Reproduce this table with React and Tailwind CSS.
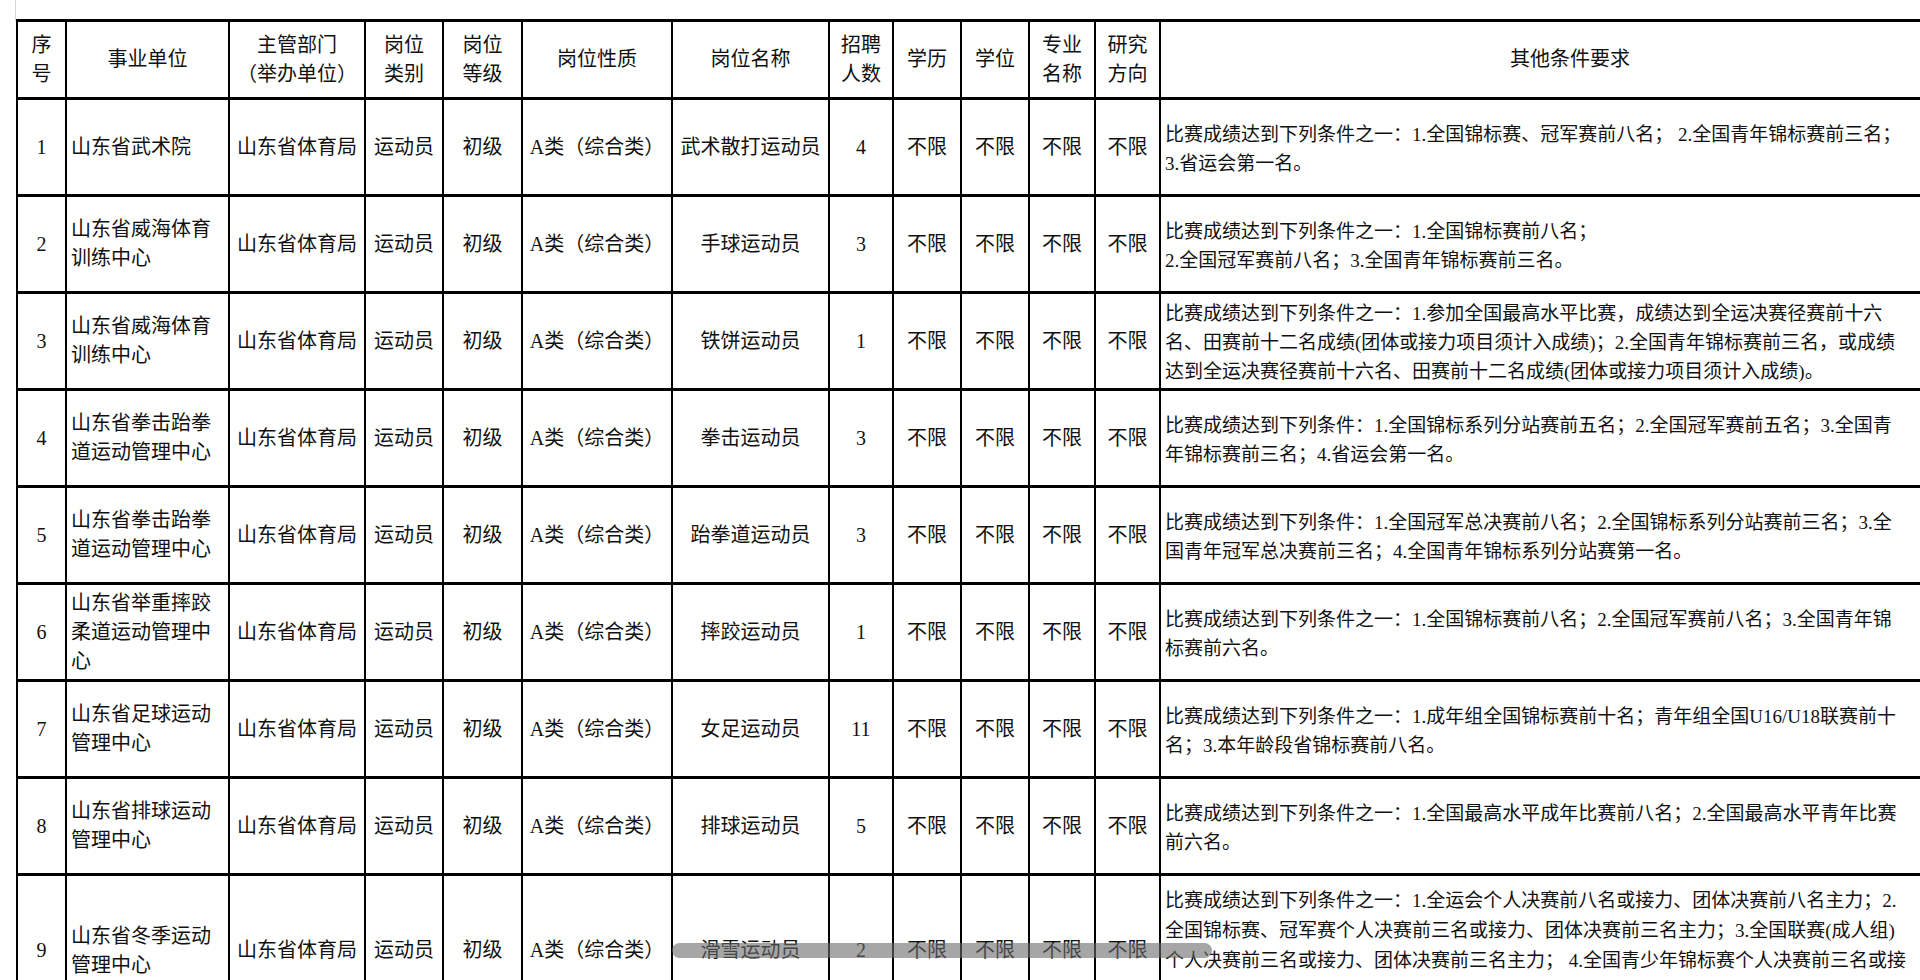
import React from "react";

const HEAD = [
  ["序", "号"],
  ["事业单位"],
  ["主管部门", "（举办单位）"],
  ["岗位", "类别"],
  ["岗位", "等级"],
  ["岗位性质"],
  ["岗位名称"],
  ["招聘", "人数"],
  ["学历"],
  ["学位"],
  ["专业", "名称"],
  ["研究", "方向"],
  ["其他条件要求"],
];

const COLS = [49, 163, 136, 78, 79, 150, 157, 64, 68, 68, 66, 65, 820];

const ROWS = [
  {
    n: "1",
    unit: ["山东省武术院"],
    name: "武术散打运动员",
    count: "4",
    cond: ["比赛成绩达到下列条件之一：1.全国锦标赛、冠军赛前八名； 2.全国青年锦标赛前三名；", "3.省运会第一名。"],
  },
  {
    n: "2",
    unit: ["山东省威海体育", "训练中心"],
    name: "手球运动员",
    count: "3",
    cond: ["比赛成绩达到下列条件之一：1.全国锦标赛前八名；", "2.全国冠军赛前八名；3.全国青年锦标赛前三名。"],
  },
  {
    n: "3",
    unit: ["山东省威海体育", "训练中心"],
    name: "铁饼运动员",
    count: "1",
    cond: [
      "比赛成绩达到下列条件之一：1.参加全国最高水平比赛，成绩达到全运决赛径赛前十六",
      "名、田赛前十二名成绩(团体或接力项目须计入成绩)；2.全国青年锦标赛前三名，或成绩",
      "达到全运决赛径赛前十六名、田赛前十二名成绩(团体或接力项目须计入成绩)。",
    ],
  },
  {
    n: "4",
    unit: ["山东省拳击跆拳", "道运动管理中心"],
    name: "拳击运动员",
    count: "3",
    cond: ["比赛成绩达到下列条件：1.全国锦标系列分站赛前五名；2.全国冠军赛前五名；3.全国青", "年锦标赛前三名；4.省运会第一名。"],
  },
  {
    n: "5",
    unit: ["山东省拳击跆拳", "道运动管理中心"],
    name: "跆拳道运动员",
    count: "3",
    cond: ["比赛成绩达到下列条件：1.全国冠军总决赛前八名；2.全国锦标系列分站赛前三名；3.全", "国青年冠军总决赛前三名；4.全国青年锦标系列分站赛第一名。"],
  },
  {
    n: "6",
    unit: ["山东省举重摔跤", "柔道运动管理中", "心"],
    name: "摔跤运动员",
    count: "1",
    cond: ["比赛成绩达到下列条件之一：1.全国锦标赛前八名；2.全国冠军赛前八名；3.全国青年锦", "标赛前六名。"],
  },
  {
    n: "7",
    unit: ["山东省足球运动", "管理中心"],
    name: "女足运动员",
    count: "11",
    cond: ["比赛成绩达到下列条件之一：1.成年组全国锦标赛前十名；青年组全国U16/U18联赛前十", "名；3.本年龄段省锦标赛前八名。"],
  },
  {
    n: "8",
    unit: ["山东省排球运动", "管理中心"],
    name: "排球运动员",
    count: "5",
    cond: ["比赛成绩达到下列条件之一：1.全国最高水平成年比赛前八名；2.全国最高水平青年比赛", "前六名。"],
  },
  {
    n: "9",
    unit: ["山东省冬季运动", "管理中心"],
    name: "滑雪运动员",
    count: "2",
    cond: [
      "比赛成绩达到下列条件之一：1.全运会个人决赛前八名或接力、团体决赛前八名主力；2.",
      "全国锦标赛、冠军赛个人决赛前三名或接力、团体决赛前三名主力；3.全国联赛(成人组)",
      "个人决赛前三名或接力、团体决赛前三名主力； 4.全国青少年锦标赛个人决赛前三名或接",
      "力、团体决赛前三名主力；5.省运会、省锦标赛冠军或接力、团体决赛冠军主力；6.亚洲",
    ],
    last: true,
  },
];

const cell = "border-x-2 border-y-[3px] border-black align-middle p-0";

const Lines = ({ items }) => items.map((t, i) => (
  <div key={i} className="whitespace-nowrap">{t}</div>
));

export default function App() {
  return (
    <div className="relative w-[1920px] h-[980px] overflow-hidden bg-white text-[#111] text-[20px] leading-[29px] font-['Liberation_Serif','Noto_Sans_CJK_SC',serif]">
      {/* top strip */}
      <div className="h-[21px] ml-[15px] border-l border-[#d4d4dc] border-b-2 border-b-[#d8d8ea]" />

      <table className="table-fixed border-collapse ml-[16px] -mt-[2px]" style={{ width: COLS.reduce((a, b) => a + b, 0) }}>
        <colgroup>
          {COLS.map((w, i) => <col key={i} style={{ width: w }} />)}
        </colgroup>
        <thead>
          <tr className="h-[78px]">
            {HEAD.map((h, i) => (
              <th key={i} className={`${cell} font-normal text-center`}>
                <Lines items={h} />
              </th>
            ))}
          </tr>
        </thead>
        <tbody>
          {ROWS.map((r) => (
            <tr key={r.n} className={r.last ? "h-[152px]" : "h-[97px]"}>
              <td className={`${cell} text-center`}>{r.n}</td>
              <td className={`${cell} text-left pl-[4px]`}><Lines items={r.unit} /></td>
              <td className={`${cell} text-center`}>山东省体育局</td>
              <td className={`${cell} text-center`}>运动员</td>
              <td className={`${cell} text-center`}>初级</td>
              <td className={`${cell} text-center`}>A类（综合类）</td>
              <td className={`${cell} text-center`}>{r.name}</td>
              <td className={`${cell} text-center`}>{r.count}</td>
              <td className={`${cell} text-center`}>不限</td>
              <td className={`${cell} text-center`}>不限</td>
              <td className={`${cell} text-center`}>不限</td>
              <td className={`${cell} text-center`}>不限</td>
              <td className={`${cell} text-left pl-[4px] text-[19px] ${r.last ? "!align-top pt-[10px] leading-[30px]" : "pt-[3px]"}`}>
                <Lines items={r.cond} />
              </td>
            </tr>
          ))}
        </tbody>
      </table>

      {/* scrollbar thumb over the last row */}
      <div className="absolute left-[672px] top-[943px] w-[540px] h-[15px] rounded-full bg-[#6a6a6a]/60" />
    </div>
  );
}
